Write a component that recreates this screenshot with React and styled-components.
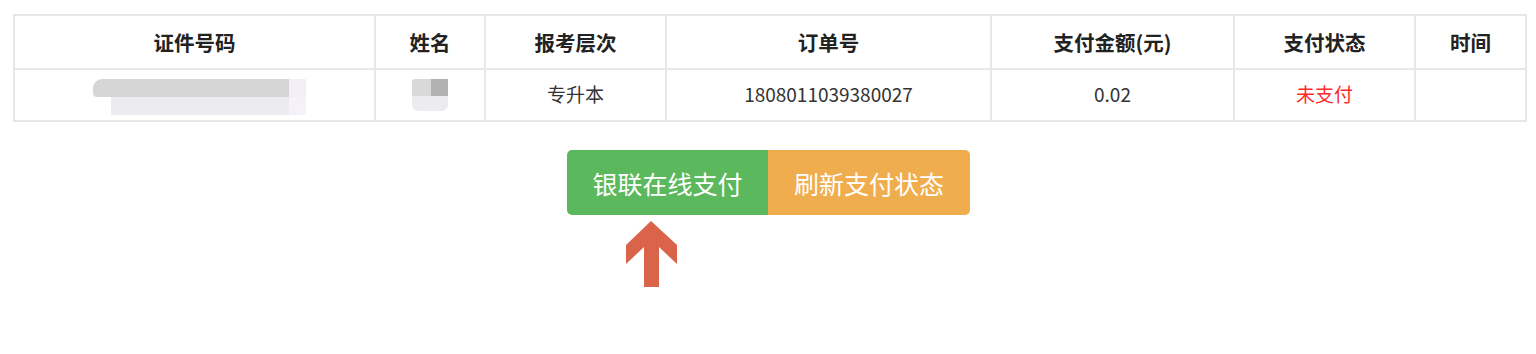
import React from 'react';
import styled, { createGlobalStyle } from 'styled-components';

const GlobalStyle = createGlobalStyle`
    body {
        margin: 0;
        background: #ffffff;
        font-family: "Noto Sans CJK SC", "Noto Sans", sans-serif;
        color: #333333;
    }
`;

const Page = styled.div`
    padding: 14px 11px 0 13px;
`;

const Table = styled.table`
    width: 1512px;
    border-collapse: collapse;
    table-layout: fixed;
    border: 2px solid #e6e6eb;
`;

const HeadCell = styled.th`
    height: 52px;
    padding: 0;
    border: 2px solid #e6e6eb;
    font-size: 20.5px;
    font-weight: 700;
    color: #222222;
    text-align: center;
    vertical-align: middle;
`;

const Cell = styled.td`
    height: 52px;
    padding: 0 0 3px;
    border: 2px solid #e6e6eb;
    font-size: 19px;
    color: ${(p) => p.$color || '#333333'};
    text-align: center;
    vertical-align: middle;
    box-sizing: border-box;
`;

const Blur = styled.div`
    display: grid;
    grid-template-columns: ${(p) => p.$cols};
    grid-template-rows: ${(p) => p.$rows};
    width: max-content;
    margin: ${(p) => p.$margin};
`;

const Patch = styled.div`
    background: ${(p) => p.$bg};
    border-radius: ${(p) => p.$radius || '0'};
`;

const Actions = styled.div`
    display: flex;
    flex-direction: column;
    align-items: center;
    margin-top: 28px;
    margin-left: -1px;
`;

const ButtonGroup = styled.div`
    display: flex;
`;

const Button = styled.button`
    height: 65px;
    padding: 0 ${(p) => p.$pad};
    border: none;
    font-family: "Noto Sans CJK SC", sans-serif;
    font-size: 25px;
    color: #ffffff;
    background: ${(p) => p.$bg};
    border-radius: ${(p) => p.$radius};
    cursor: pointer;
`;

const ArrowRow = styled.div`
    width: 403px;
    padding-left: 59px;
    margin-top: 6px;
    box-sizing: border-box;
`;

const columns = [
    { title: '证件号码', width: 361 },
    { title: '姓名', width: 110 },
    { title: '报考层次', width: 181 },
    { title: '订单号', width: 325 },
    { title: '支付金额(元)', width: 243 },
    { title: '支付状态', width: 181 },
    { title: '时间', width: 111 },
];

const Arrow = () => (
    <svg width="51" height="66" viewBox="0 0 51 66">
        <polygon
            points="25,0 51,24 51,43 33,26 33,66 18,66 18,26 0,43 0,24"
            fill="#d9644a"
        />
    </svg>
);

const App = () => {
    return (
        <Page>
            <GlobalStyle />
            <Table>
                <colgroup>
                    {columns.map((c) => (
                        <col key={c.title} style={{ width: c.width }} />
                    ))}
                </colgroup>
                <thead>
                    <tr>
                        {columns.map((c) => (
                            <HeadCell key={c.title}>{c.title}</HeadCell>
                        ))}
                    </tr>
                </thead>
                <tbody>
                    <tr>
                        <Cell>
                            <Blur $cols="18px 178px 17px" $rows="18px 18px" $margin="6px 0 0 78px">
                                <Patch $bg="#d6d6d6" $radius="9px 0 0 4px" style={{ gridColumn: '1 / 3' }} />
                                <Patch $bg="#f3eef8" />
                                <Patch $bg="#fff" />
                                <Patch $bg="#ebebf0" />
                                <Patch $bg="#f5f0f9" />
                            </Blur>
                        </Cell>
                        <Cell>
                            <Blur $cols="19px 17px" $rows="17px 15px" $margin="2px auto 0 36px">
                                <Patch $bg="#d9d9d9" $radius="3px 0 0 0" />
                                <Patch $bg="#b2b2b2" />
                                <Patch $bg="#ebebf0" $radius="0 0 6px 6px" style={{ gridColumn: '1 / 3' }} />
                            </Blur>
                        </Cell>
                        <Cell>专升本</Cell>
                        <Cell>1808011039380027</Cell>
                        <Cell>0.02</Cell>
                        <Cell $color="#ff2a2a">未支付</Cell>
                        <Cell />
                    </tr>
                </tbody>
            </Table>
            <Actions>
                <ButtonGroup>
                    <Button $bg="#5cb85c" $pad="25.5px" $radius="5px 0 0 5px">银联在线支付</Button>
                    <Button $bg="#f0ad4e" $pad="26px" $radius="0 5px 5px 0">刷新支付状态</Button>
                </ButtonGroup>
                <ArrowRow>
                    <Arrow />
                </ArrowRow>
            </Actions>
        </Page>
    );
};

export default App;
